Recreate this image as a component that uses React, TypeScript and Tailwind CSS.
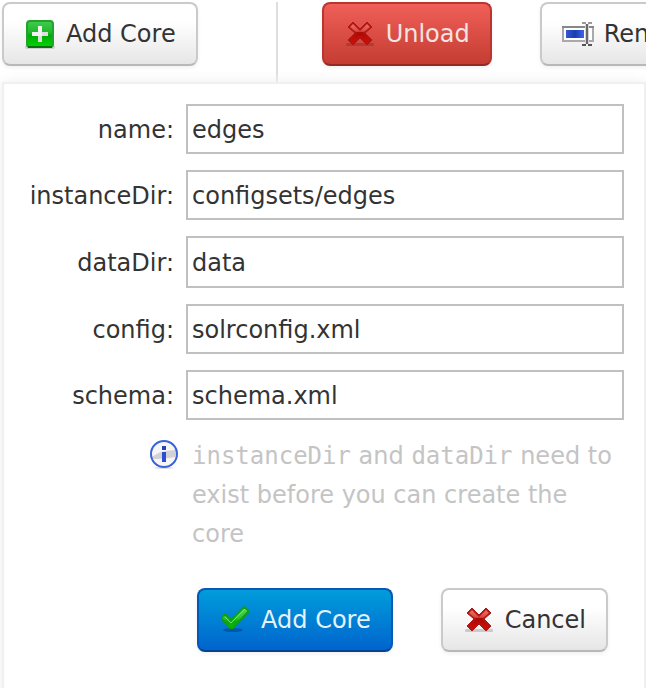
import type { ReactNode } from "react";

type Field = { id: string; value: string; height: string };

const fields: Field[] = [
  { id: "name", value: "edges", height: "h-[50px]" },
  { id: "instanceDir", value: "configsets/edges", height: "h-[50px]" },
  { id: "dataDir", value: "data", height: "h-[52px]" },
  { id: "config", value: "solrconfig.xml", height: "h-[50px]" },
  { id: "schema", value: "schema.xml", height: "h-[50px]" },
];

function PlusIcon() {
  return (
    <svg viewBox="0 0 32 32" className="size-8 shrink-0" aria-hidden="true">
      <defs>
        <linearGradient id="plusFill" x1="0" y1="0" x2="0" y2="1">
          <stop offset="0" stopColor="#42cd4e" />
          <stop offset="0.45" stopColor="#1fb52a" />
          <stop offset="0.55" stopColor="#02a80a" />
          <stop offset="1" stopColor="#00d800" />
        </linearGradient>
      </defs>
      <rect x="1" y="27" width="30" height="4" rx="2" fill="#000" opacity="0.14" />
      <rect x="3" y="3" width="26" height="26" rx="3" fill="url(#plusFill)" stroke="#24a32c" strokeWidth="2" />
      <path d="M4 29h24" stroke="#0b6e10" strokeWidth="2" />
      <path d="M14 8h4v6h6v4h-6v6h-4v-6H8v-4h6z" fill="#f1f1f1" />
      <path d="M14 18h4v6h-4zM18 14h6v4h-6z" fill="#dedede" />
    </svg>
  );
}

function CrossIcon() {
  return (
    <svg viewBox="0 0 32 32" className="size-8 shrink-0" aria-hidden="true">
      <defs>
        <linearGradient id="crossFill" x1="0" y1="4" x2="0" y2="27" gradientUnits="userSpaceOnUse">
          <stop offset="0" stopColor="#f07a73" />
          <stop offset="0.4" stopColor="#dc4a43" />
          <stop offset="0.46" stopColor="#a80a05" />
          <stop offset="1" stopColor="#e00d00" />
        </linearGradient>
      </defs>
      <rect x="2" y="25" width="28" height="3" rx="1" fill="#000" opacity="0.16" />
      <path
        d="M9 4L16 11L23 4L28 9L21 15L28 22L23 27L16 20L9 27L4 22L11 15L4 9z"
        fill="#b01712"
        stroke="#b01712"
        strokeWidth="1"
        strokeLinejoin="round"
      />
      <path
        d="M9 6L16 13L23 6L26 9L19 15L26 22L23 25L16 18L9 25L6 22L13 15L6 9z"
        fill="url(#crossFill)"
      />
    </svg>
  );
}

function TickIcon() {
  return (
    <svg viewBox="0 0 32 32" className="size-8 shrink-0" aria-hidden="true">
      <defs>
        <linearGradient id="tickFill" x1="0" y1="2" x2="0" y2="26" gradientUnits="userSpaceOnUse">
          <stop offset="0" stopColor="#58d95c" />
          <stop offset="0.5" stopColor="#2cc432" />
          <stop offset="0.65" stopColor="#06ac0a" />
          <stop offset="1" stopColor="#00c400" />
        </linearGradient>
      </defs>
      <ellipse cx="14" cy="26" rx="10" ry="2" fill="#002a70" opacity="0.4" />
      <path
        d="M25 3l4 3v2L14 24h-3L3 15v-2l3-3 6 6z"
        fill="url(#tickFill)"
        stroke="#139c1b"
        strokeWidth="2"
        strokeLinejoin="round"
      />
      <path d="M26 5L12 19l-6-6" fill="none" stroke="#6ee372" strokeWidth="1" />
    </svg>
  );
}

function RenameIcon() {
  return (
    <svg viewBox="0 0 32 32" className="size-8 shrink-0" aria-hidden="true">
      <defs>
        <linearGradient id="selection" x1="0" y1="0" x2="1" y2="0">
          <stop offset="0" stopColor="#315ad8" />
          <stop offset="0.5" stopColor="#1c3cae" />
          <stop offset="1" stopColor="#3d66ee" />
        </linearGradient>
      </defs>
      <rect x="1" y="9" width="30" height="14" fill="#fff" stroke="#a9a9a9" strokeWidth="2" />
      <path d="M0 9h32" stroke="#878787" strokeWidth="2" />
      <rect x="4" y="12" width="18" height="8" fill="url(#selection)" />
      <path d="M25 6v20" stroke="#d4d4d4" strokeWidth="4" />
      <path d="M25 6v20" stroke="#686868" strokeWidth="2" />
      <path d="M20 5h4M26 5h4" stroke="#999" strokeWidth="2" />
      <path d="M20 27h4M26 27h4" stroke="#555" strokeWidth="2" />
    </svg>
  );
}

function InfoIcon() {
  return (
    <svg viewBox="0 0 32 32" className="size-8 shrink-0" aria-hidden="true">
      <ellipse cx="16" cy="29" rx="10" ry="1" fill="#000" opacity="0.12" />
      <circle cx="16" cy="15" r="13" fill="#f6f6f6" />
      <path d="M4 18Q10 12 28 11a13 13 0 0 1-1 7Q14 20 5 20z" fill="#d2d2d2" />
      <circle cx="16" cy="15" r="13" fill="none" stroke="#3a62db" strokeWidth="2" />
      <path d="M14 7h4v4h-4z" fill="#2445b5" />
      <path d="M14 13h4v10h-4z" fill="#2b4fd0" />
    </svg>
  );
}

const tones = {
  plain:
    "border-[#cacaca] border-b-[#b8b8b8] bg-linear-to-b from-white from-30% to-[#e6e6e6] text-[#333]",
  danger:
    "border-[#b83530] border-b-[#942a25] bg-linear-to-b from-[#f05f58] to-[#c43c32] text-[#f3e3e2]",
  primary:
    "border-[#0558b5] border-b-[#03428f] bg-linear-to-b from-[#049cdb] to-[#0064cd] text-[#e6f2fb]",
};

function Button({ tone, icon, children }: { tone: keyof typeof tones; icon: ReactNode; children: ReactNode }) {
  return (
    <button
      type="button"
      className={`flex h-16 shrink-0 items-center gap-2.5 rounded-lg border-2 px-5 leading-7 whitespace-nowrap shadow-[0_2px_4px_rgba(0,0,0,0.06)] ${tones[tone]}`}
    >
      {icon}
      {children}
    </button>
  );
}

export default function App() {
  return (
    <main className="min-h-screen overflow-hidden bg-white pt-0.5 font-['DejaVu_Sans',sans-serif] text-2xl text-[#333]">
      <div className="flex h-20 items-start pl-0.5">
        <Button tone="plain" icon={<PlusIcon />}>Add Core</Button>
        <div className="ml-[78px] w-0.5 shrink-0 self-stretch bg-linear-to-b from-[#dedede] from-88% to-[#f0f0f0]" />
        <div className="ml-11 flex gap-12">
          <Button tone="danger" icon={<CrossIcon />}>Unload</Button>
          <Button tone="plain" icon={<RenameIcon />}>Rename</Button>
        </div>
      </div>

      <form className="relative ml-0.5 min-h-[620px] border-2 border-[#f0f0f0] bg-white pt-5 pr-5 shadow-[0_0_12px_rgba(0,0,0,0.07)]">
        <div className="flex flex-col gap-4">
          {fields.map((field) => (
            <div key={field.id} className="flex items-center gap-3">
              <label htmlFor={field.id} className="w-[170px] shrink-0 pt-0.5 text-right">
                {field.id}:
              </label>
              <input
                id={field.id}
                type="text"
                defaultValue={field.value}
                className={`min-w-0 flex-1 border-2 border-[#c0c0c0] bg-white px-1 pt-0.5 outline-none ${field.height}`}
              />
            </div>
          ))}
        </div>

        <div className="mt-[17px] flex gap-3 pl-36 text-[#c4c4c4]">
          <div className="pt-0.5">
            <InfoIcon />
          </div>
          <p className="leading-[39px]">
            <code className="font-['DejaVu_Sans_Mono',monospace] text-2xl leading-[39px]">instanceDir</code> and{" "}
            <code className="font-['DejaVu_Sans_Mono',monospace] text-2xl leading-[39px]">dataDir</code> need to exist
            before you can create the core
          </p>
        </div>

        <div className="mt-[34px] flex justify-end gap-12 pr-4">
          <Button tone="primary" icon={<TickIcon />}>Add Core</Button>
          <Button tone="plain" icon={<CrossIcon />}>Cancel</Button>
        </div>
      </form>
    </main>
  );
}
